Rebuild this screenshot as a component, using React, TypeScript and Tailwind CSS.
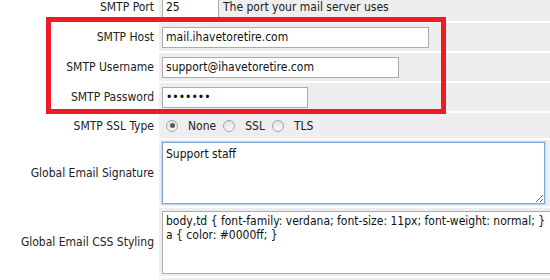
import React, { FC, ReactNode } from "react";

/* ─── Radio (classic gray look) ─────────────────────────── */
const Radio: FC<{ checked?: boolean; label: string }> = ({ checked, label }) => (
  <label className="mr-[7px] flex items-center gap-[10px]">
    <span className="flex h-[12px] w-[12px] items-center justify-center rounded-full border border-[#a5a5a5] bg-gradient-to-b from-[#e2e2e2] to-[#f8f8f8]">
      {checked && <span className="h-[5px] w-[5px] rounded-full bg-[#5a5a5a]" />}
    </span>
    <span>{label}</span>
  </label>
);

/* ─── Row ───────────────────────────────────────────────── */
const Row: FC<{ label?: string; h: string; children?: ReactNode }> = ({ label, h, children }) => (
  <tr className={h}>
    <td className="w-[155px] pr-[3px] text-right align-middle whitespace-nowrap">{label}</td>
    <td className="bg-[#eeeeee] pl-[3px] align-middle">{children}</td>
  </tr>
);

const inputCls =
  "h-[21px] border border-[#ababab] bg-white px-[3px] text-[#111] outline-none";

export default function App() {
  return (
    <div className="relative h-[280px] w-[550px] overflow-hidden bg-white font-['Tahoma','DejaVu_Sans_Condensed','Liberation_Sans',sans-serif] text-[12px] text-[#222]">
      <table className="-mt-[9px] w-[600px] table-fixed border-separate border-spacing-[2px]">
        <tbody>
          <Row label="SMTP Port" h="h-[28px]">
            <div className="flex items-center">
              <input className={`${inputCls} w-[57px]`} defaultValue="25" readOnly />
              <span className="ml-[4px]">The port your mail server uses</span>
            </div>
          </Row>
          <Row label="SMTP Host" h="h-[28px]">
            <input className={`${inputCls} block w-[267px]`} defaultValue="mail.ihavetoretire.com" readOnly />
          </Row>
          <Row label="SMTP Username" h="h-[28px]">
            <input className={`${inputCls} block w-[237px]`} defaultValue="support@ihavetoretire.com" readOnly />
          </Row>
          <Row label="SMTP Password" h="h-[28px]">
            <input type="password" className={`${inputCls} block w-[146px]`} defaultValue="1234567" readOnly />
          </Row>
          <Row label="SMTP SSL Type" h="h-[25px]">
            <div className="flex items-center pl-[4px]">
              <Radio checked label="None" />
              <Radio label="SSL" />
              <Radio label="TLS" />
            </div>
          </Row>
          <Row label="Global Email Signature" h="h-[66px]">
            <textarea
              className="block h-[62px] w-[383px] border border-[#7aa6dc] bg-white px-[3px] py-[2px] text-[#111] shadow-[0_0_0_1px_#c4d9f1] outline-none"
              defaultValue="Support staff"
            />
          </Row>
          <Row label="Global Email CSS Styling" h="h-[68px]">
            <textarea
              wrap="off"
              className="block h-[63px] w-[420px] resize-none overflow-hidden border border-[#ababab] bg-white px-[3px] py-[2px] leading-[14px] text-[#111] outline-none"
              defaultValue={
                "body,td { font-family: verdana; font-size: 11px; font-weight: normal; }\na { color: #0000ff; }"
              }
            />
          </Row>
          <Row h="h-[28px]" />
        </tbody>
      </table>

      {/* Annotation box */}
      <div className="pointer-events-none absolute left-[46px] top-[17px] h-[97px] w-[400px] border-[5px] border-[#ed1c24]" />
    </div>
  );
}
